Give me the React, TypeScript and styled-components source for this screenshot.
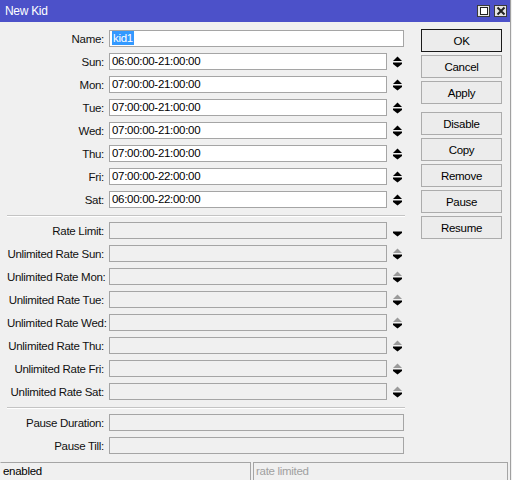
import React from "react";
import styled, { createGlobalStyle } from "styled-components";

type Spin = "none" | "both" | "down" | "dim";

const schedule = [
  { label: "Sun", value: "06:00:00-21:00:00" },
  { label: "Mon", value: "07:00:00-21:00:00" },
  { label: "Tue", value: "07:00:00-21:00:00" },
  { label: "Wed", value: "07:00:00-21:00:00" },
  { label: "Thu", value: "07:00:00-21:00:00" },
  { label: "Fri", value: "07:00:00-22:00:00" },
  { label: "Sat", value: "06:00:00-22:00:00" },
];

const days = ["Sun", "Mon", "Tue", "Wed", "Thu", "Fri", "Sat"];

const buttons = [
  ["OK", "Cancel", "Apply"],
  ["Disable", "Copy", "Remove", "Pause", "Resume"],
];

function SpinIcon({ kind }: { kind: Spin }) {
  if (kind === "none") return null;
  return (
    <SpinBox>
      <svg width="9" height="12" viewBox="0 0 9 12">
        {kind !== "down" && (
          <polygon points="0,5 4.5,0.5 9,5" fill={kind === "dim" ? "#9a9a9a" : "#000"} />
        )}
        <rect x="0" y="6.5" width="9" height="1.5" fill="#000" />
        <polygon points="0,8 9,8 4.5,11.5" fill="#000" />
      </svg>
    </SpinBox>
  );
}

function Row({
  label,
  value,
  spin = "none",
  disabled,
  selected,
}: {
  label: string;
  value?: string;
  spin?: Spin;
  disabled?: boolean;
  selected?: boolean;
}) {
  return (
    <StyledRow>
      <Label>{label}:</Label>
      <Field>
        <Input $disabled={disabled} $wide={spin === "none"}>
          {selected ? <Selection>{value}</Selection> : value}
        </Input>
        <SpinIcon kind={spin} />
      </Field>
    </StyledRow>
  );
}

export default function App() {
  return (
    <>
      <GlobalStyle />
      <Window>
        <TitleBar>
          <span>New Kid</span>
          <TitleButtons>
            <TitleButton>
              <svg width="10" height="10" viewBox="0 0 10 10">
                <rect x="1.5" y="1.5" width="7" height="7" fill="#fff" stroke="#222" strokeWidth="1" />
              </svg>
            </TitleButton>
            <TitleButton>
              <svg width="10" height="10" viewBox="0 0 10 10">
                <path d="M1.5 1.5 L8.5 8.5 M8.5 1.5 L1.5 8.5" stroke="#222" strokeWidth="2" />
              </svg>
            </TitleButton>
          </TitleButtons>
        </TitleBar>

        <Body>
          <Form>
            <Row label="Name" value="kid1" selected />
            {schedule.map((d) => (
              <Row key={d.label} label={d.label} value={d.value} spin="both" />
            ))}
            <Separator />
            <Row label="Rate Limit" spin="down" disabled />
            {days.map((d) => (
              <Row key={d} label={`Unlimited Rate ${d}`} spin="dim" disabled />
            ))}
            <Separator />
            <Row label="Pause Duration" disabled />
            <Row label="Pause Till" disabled />
          </Form>

          <ButtonColumn>
            {buttons.map((group, i) => (
              <ButtonGroup key={i}>
                {group.map((b) => (
                  <Button key={b} $default={b === "OK"}>
                    {b}
                  </Button>
                ))}
              </ButtonGroup>
            ))}
          </ButtonColumn>
        </Body>

        <StatusBar>
          <StatusCell $width="251px">enabled</StatusCell>
          <StatusCell $muted>rate limited</StatusCell>
        </StatusBar>
      </Window>
    </>
  );
}

const GlobalStyle = createGlobalStyle`
  html, body {
    margin: 0;
    background: #f0f0f0;
  }
  body {
    font-family: "Liberation Sans", Arial, sans-serif;
    font-size: 11.5px;
    letter-spacing: -0.3px;
    color: #000;
  }
`;

const Window = styled.div`
  box-sizing: border-box;
  width: 511px;
  height: 480px;
  display: flex;
  flex-direction: column;
  border-right: 1px solid #a0a0a0;
  background: #f0f0f0;
`;

const TitleBar = styled.div`
  height: 22px;
  flex-shrink: 0;
  display: flex;
  align-items: center;
  justify-content: space-between;
  padding: 0 3px 0 5px;
  background: #4c51c9;
  color: #fff;
  font-size: 12px;
`;

const TitleButtons = styled.div`
  display: flex;
  gap: 4px;
`;

const TitleButton = styled.div`
  box-sizing: border-box;
  width: 13px;
  height: 12px;
  display: flex;
  align-items: center;
  justify-content: center;
  background: #e4e4e4;
  border: 1px solid #3a3a3a;
`;

const Body = styled.div`
  flex: 1;
  display: flex;
  padding-top: 8px;
`;

const Form = styled.div`
  width: 398px;
  padding-left: 7px;
  display: flex;
  flex-direction: column;
  gap: 6px;
`;

const StyledRow = styled.div`
  display: grid;
  grid-template-columns: 97px 1fr;
  column-gap: 5px;
  align-items: center;
  height: 17px;
`;

const Label = styled.div`
  text-align: right;
  white-space: nowrap;
  color: #111;
`;

const Field = styled.div`
  display: flex;
  align-items: center;
  gap: 6px;
  padding-right: 3px;
`;

const Input = styled.div<{ $disabled?: boolean; $wide?: boolean }>`
  box-sizing: border-box;
  flex: 1;
  height: 17px;
  margin-right: ${(p) => (p.$wide ? "-2px" : "0")};
  padding: 0 2px;
  line-height: 15px;
  white-space: nowrap;
  background: ${(p) => (p.$disabled ? "#f0f0f0" : "#fff")};
  border: 1px solid #a5a5a5;
`;

const Selection = styled.span`
  background: #3399ff;
  color: #fff;
  padding: 1px 1px;
`;

const SpinBox = styled.div`
  width: 9px;
  height: 12px;
  display: flex;
`;

const Separator = styled.div`
  height: 1px;
  margin-top: 1px;
  background: #c4c4c4;
  box-shadow: 0 1px 0 #fff;
`;

const ButtonColumn = styled.div`
  width: 81px;
  margin: -1px 0 0 16px;
  display: flex;
  flex-direction: column;
  gap: 8px;
`;

const ButtonGroup = styled.div`
  display: flex;
  flex-direction: column;
  gap: 3px;
`;

const Button = styled.div<{ $default?: boolean }>`
  box-sizing: border-box;
  height: 23px;
  display: flex;
  align-items: center;
  justify-content: center;
  background: #ececec;
  border: 1px solid ${(p) => (p.$default ? "#1a1a1a" : "#acacac")};
  color: #000;
`;

const StatusBar = styled.div`
  height: 18px;
  flex-shrink: 0;
  display: flex;
  gap: 2px;
  padding-right: 2px;
`;

const StatusCell = styled.div<{ $width?: string; $muted?: boolean }>`
  box-sizing: border-box;
  width: ${(p) => p.$width ?? "auto"};
  flex: ${(p) => (p.$width ? "none" : "1")};
  padding-left: 2px;
  line-height: 17px;
  border: 1px solid #a5a5a5;
  border-bottom: none;
  border-left-color: ${(p) => (p.$width ? "transparent" : "#a5a5a5")};
  color: ${(p) => (p.$muted ? "#a0a0a0" : "#000")};
`;
